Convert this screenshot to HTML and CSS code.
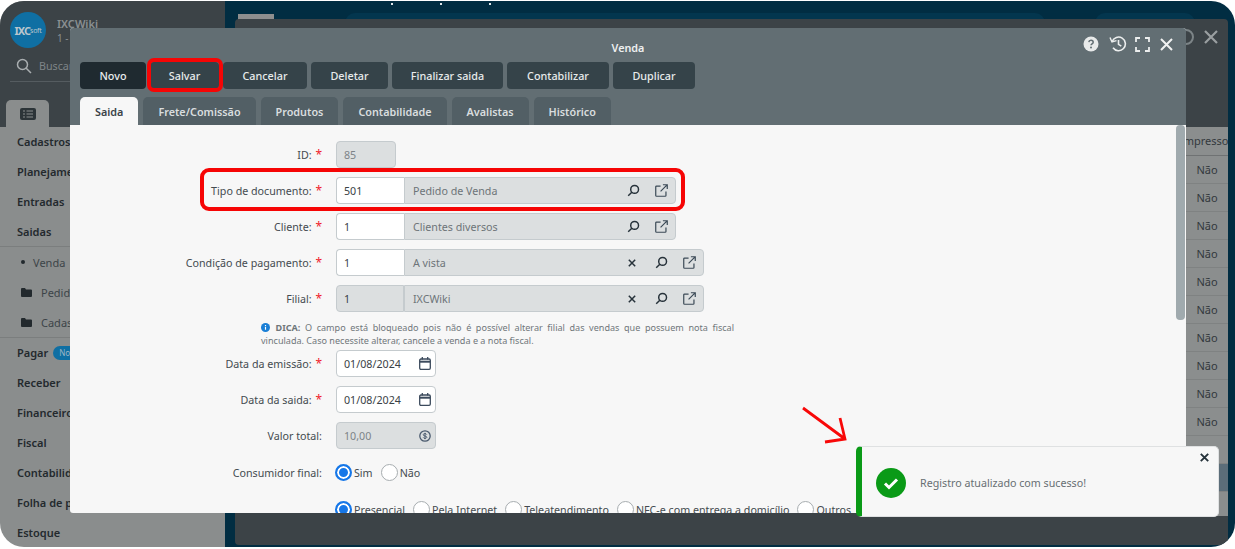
FILE: index.html
```html
<!DOCTYPE html>
<html lang="pt-BR">
<head>
  <meta charset="UTF-8">
  <title>Venda</title>
  <link rel="stylesheet" href="styles.css">
</head>
<body>
  <div class="frame">
    <aside class="sidebar">
      <div class="side-top">
        <div class="brand">
          <div class="logo"><b>IXC</b><span>soft</span></div>
          <div class="brand-text">
            <div class="brand-name">IXCWiki</div>
            <div class="brand-sub">1 - IXCWiki</div>
          </div>
        </div>
        <div class="side-search">
          <svg width="16" height="16" viewBox="0 0 16 16" fill="none" stroke="#a9aeb0" stroke-width="1.5"><circle cx="6.5" cy="6.5" r="5"/><path d="M10.2 10.2 15 15"/></svg>
          <span>Buscar</span>
        </div>
        <div class="side-tab">
          <svg width="16" height="12" viewBox="0 0 16 12"><rect width="16" height="12" rx="2" fill="#2c3438"/><path d="M3 3h2M3 6h2M3 9h2M6.500 3H13M6.500 6H13M6.500 9H13" stroke="#8a8d8d" stroke-width="1.200"/></svg>
        </div>
      </div>
      <nav class="side-menu">
        <div class="menu-item">Cadastros</div>
        <div class="menu-item">Planejamento</div>
        <div class="menu-item">Entradas</div>
        <div class="menu-item">Saidas</div>
        <div class="submenu">
          <div class="sub-item"><i class="dot"></i>Venda</div>
          <div class="sub-item"><svg class="folder" width="11" height="9" viewBox="0 0 11 9"><path d="M0 1a1 1 0 0 1 1-1h3l1 1.500h5a1 1 0 0 1 1 1V8a1 1 0 0 1-1 1H1a1 1 0 0 1-1-1z" fill="#22292d"/></svg>Pedidos</div>
          <div class="sub-item"><svg class="folder" width="11" height="9" viewBox="0 0 11 9"><path d="M0 1a1 1 0 0 1 1-1h3l1 1.500h5a1 1 0 0 1 1 1V8a1 1 0 0 1-1 1H1a1 1 0 0 1-1-1z" fill="#22292d"/></svg>Cadastros</div>
        </div>
        <div class="menu-item">Pagar <span class="badge">Novo</span></div>
        <div class="menu-item">Receber</div>
        <div class="menu-item">Financeiro</div>
        <div class="menu-item">Fiscal</div>
        <div class="menu-item">Contabilidade</div>
        <div class="menu-item">Folha de pagamento</div>
        <div class="menu-item">Estoque</div>
      </nav>
    </aside>

    <main class="desktop">
      <div class="dots"><i></i><i></i><i></i></div>
      <div class="pill pill-a"></div>
      <div class="pill pill-b"></div>
      <div class="back-tab"></div>
      <section class="back-window">
        <div class="back-head">
          <svg class="back-help" width="16" height="16" viewBox="0 0 16 16" fill="none" stroke="#7c8487" stroke-width="2"><circle cx="8" cy="8" r="7"/></svg>
          <svg width="16" height="16" viewBox="0 0 16 16" stroke="#9a9fa1" stroke-width="2.200"><path d="M2 2l12 12M14 2 2 14"/></svg>
        </div>
        <div class="back-table">
          <div class="back-th">Impresso</div>
          <div class="back-td">Não</div>
          <div class="back-td">Não</div>
          <div class="back-td">Não</div>
          <div class="back-td">Não</div>
          <div class="back-td">Não</div>
          <div class="back-td">Não</div>
          <div class="back-td">Não</div>
          <div class="back-td">Não</div>
          <div class="back-td">Não</div>
          <div class="back-td">Não</div>
          <div class="back-td"></div>
          <div class="back-td back-selected"></div>
          <div class="back-td"></div>
        </div>
      </section>
    </main>

    <section class="modal">
      <header class="modal-head">
        <div class="modal-title">Venda</div>
        <div class="modal-icons">
          <svg width="16" height="16" viewBox="0 0 16 16"><circle cx="8" cy="8" r="7.500" fill="#e8eaea"/><path d="M5.800 6.200A2.200 2.200 0 0 1 8 4.300c1.300 0 2.200.8 2.200 1.900 0 1.700-2.200 1.600-2.200 3.100" fill="none" stroke="#626e73" stroke-width="1.500"/><circle cx="8" cy="11.500" r="1" fill="#626e73"/></svg>
          <svg class="ico-history" width="18" height="16" viewBox="0 0 18 16" fill="none" stroke="#eceeee" stroke-width="1.600"><path d="M3.200 5.500A6.800 6.800 0 1 1 4 11.800"/><path d="M1 1.500 3 6l4.500-1.300" stroke-width="1.400"/><path d="M9.500 4v4.300l2.800 1.800"/></svg>
          <svg width="15" height="15" viewBox="0 0 15 15" fill="none" stroke="#eceeee" stroke-width="1.800"><path d="M1 5V1h4M10 1h4v4M14 10v4h-4M5 14H1v-4"/></svg>
          <svg width="13" height="13" viewBox="0 0 13 13" stroke="#f1f2f2" stroke-width="2"><path d="M1 1l11 11M12 1 1 12"/></svg>
        </div>
        <div class="toolbar">
          <button class="btn btn-dark">Novo</button>
          <button class="btn btn-save">Salvar</button>
          <button class="btn btn-cancel">Cancelar</button>
          <button class="btn btn-del">Deletar</button>
          <button class="btn btn-final">Finalizar saida</button>
          <button class="btn btn-cont">Contabilizar</button>
          <button class="btn btn-dup">Duplicar</button>
        </div>
        <div class="tabs">
          <div class="tab active">Saida</div>
          <div class="tab">Frete/Comissão</div>
          <div class="tab">Produtos</div>
          <div class="tab">Contabilidade</div>
          <div class="tab">Avalistas</div>
          <div class="tab">Histórico</div>
        </div>
      </header>

      <div class="modal-body">
        <div class="scroll-thumb"></div>
        <form class="form">
          <div class="row">
            <label class="lbl">ID: <em>*</em></label>
            <div class="field field-id disabled">85</div>
          </div>
          <div class="row">
            <label class="lbl">Tipo de documento: <em>*</em></label>
            <div class="field field-code">501</div>
            <div class="desc">
              <span class="desc-text">Pedido de Venda</span>
              <svg class="ico-search" viewBox="0 0 14 14" fill="none" stroke="#27323a" stroke-width="1.600"><circle cx="8.200" cy="5.800" r="4.200"/><path d="M5.200 8.800 1.300 12.700"/></svg>
              <svg class="ico-open" viewBox="0 0 14 14" fill="none" stroke="#3b4a56" stroke-width="1.300"><path d="M11.800 8v4.300a.9.900 0 0 1-.9.900H1.700a.9.900 0 0 1-.9-.9V3.100a.9.900 0 0 1 .9-.9H6"/><path d="M8.500.8h4.700v4.700M13 1 6 8"/></svg>
            </div>
          </div>
          <div class="row">
            <label class="lbl">Cliente: <em>*</em></label>
            <div class="field field-code">1</div>
            <div class="desc">
              <span class="desc-text">Clientes diversos</span>
              <svg class="ico-search" viewBox="0 0 14 14" fill="none" stroke="#27323a" stroke-width="1.600"><circle cx="8.200" cy="5.800" r="4.200"/><path d="M5.200 8.800 1.300 12.700"/></svg>
              <svg class="ico-open" viewBox="0 0 14 14" fill="none" stroke="#3b4a56" stroke-width="1.300"><path d="M11.800 8v4.300a.9.900 0 0 1-.9.900H1.700a.9.900 0 0 1-.9-.9V3.100a.9.900 0 0 1 .9-.9H6"/><path d="M8.500.8h4.700v4.700M13 1 6 8"/></svg>
            </div>
          </div>
          <div class="row">
            <label class="lbl">Condição de pagamento: <em>*</em></label>
            <div class="field field-code">1</div>
            <div class="desc desc-wide">
              <span class="desc-text">A vista</span>
              <svg class="ico-clear" viewBox="0 0 8 8" stroke="#27323a" stroke-width="1.500"><path d="M.8.800l6.400 6.400M7.200.800.8 7.200"/></svg>
              <svg class="ico-search" viewBox="0 0 14 14" fill="none" stroke="#27323a" stroke-width="1.600"><circle cx="8.200" cy="5.800" r="4.200"/><path d="M5.200 8.800 1.300 12.700"/></svg>
              <svg class="ico-open" viewBox="0 0 14 14" fill="none" stroke="#3b4a56" stroke-width="1.300"><path d="M11.800 8v4.300a.9.900 0 0 1-.9.900H1.700a.9.900 0 0 1-.9-.9V3.100a.9.900 0 0 1 .9-.9H6"/><path d="M8.500.8h4.700v4.700M13 1 6 8"/></svg>
            </div>
          </div>
          <div class="row">
            <label class="lbl">Filial: <em>*</em></label>
            <div class="field field-code disabled dark-text">1</div>
            <div class="desc desc-wide">
              <span class="desc-text">IXCWiki</span>
              <svg class="ico-clear" viewBox="0 0 8 8" stroke="#27323a" stroke-width="1.500"><path d="M.8.800l6.400 6.400M7.200.800.8 7.200"/></svg>
              <svg class="ico-search" viewBox="0 0 14 14" fill="none" stroke="#27323a" stroke-width="1.600"><circle cx="8.200" cy="5.800" r="4.200"/><path d="M5.200 8.800 1.300 12.700"/></svg>
              <svg class="ico-open" viewBox="0 0 14 14" fill="none" stroke="#3b4a56" stroke-width="1.300"><path d="M11.800 8v4.300a.9.900 0 0 1-.9.900H1.700a.9.900 0 0 1-.9-.9V3.100a.9.900 0 0 1 .9-.9H6"/><path d="M8.500.8h4.700v4.700M13 1 6 8"/></svg>
            </div>
          </div>
          <div class="tip">
            <svg width="9" height="9" viewBox="0 0 10 10"><circle cx="5" cy="5" r="5" fill="#1a7fd6"/><path d="M5 4.300v3.200M5 2.300v1" stroke="#fff" stroke-width="1.300"/></svg>
            <b>DICA:</b> O campo está bloqueado pois não é possível alterar filial das vendas que possuem nota fiscal vinculada. Caso necessite alterar, cancele a venda e a nota fiscal.
          </div>
          <div class="row">
            <label class="lbl">Data da emissão: <em>*</em></label>
            <div class="field field-date">01/08/2024
              <svg width="12" height="13" viewBox="0 0 12 13" fill="none" stroke="#3b4a5c" stroke-width="1.300"><rect x=".7" y="2" width="10.600" height="10.300" rx="1.200"/><path d="M.7 4.700h10.600" stroke-width="2"/><path d="M3.300 0v2.500M8.700 0v2.500"/></svg>
            </div>
          </div>
          <div class="row">
            <label class="lbl">Data da saida: <em>*</em></label>
            <div class="field field-date">01/08/2024
              <svg width="12" height="13" viewBox="0 0 12 13" fill="none" stroke="#3b4a5c" stroke-width="1.300"><rect x=".7" y="2" width="10.600" height="10.300" rx="1.200"/><path d="M.7 4.700h10.600" stroke-width="2"/><path d="M3.300 0v2.500M8.700 0v2.500"/></svg>
            </div>
          </div>
          <div class="row">
            <label class="lbl">Valor total:</label>
            <div class="field field-date disabled">10,00
              <svg width="12" height="12" viewBox="0 0 12 12" fill="none" stroke="#4a5a6e" stroke-width="1.300"><circle cx="6" cy="6" r="5.200"/><path d="M7.800 4.600C7.500 3.900 6.800 3.600 6 3.600c-1 0-1.800.5-1.800 1.200 0 1.600 3.600.8 3.600 2.400 0 .7-.8 1.200-1.800 1.200-.8 0-1.500-.3-1.800-1M6 2.800v6.400" stroke-width="1"/></svg>
            </div>
          </div>
          <div class="row row-radio">
            <label class="lbl">Consumidor final:</label>
            <div class="radios">
              <span class="radio on"></span><span class="radio-text">Sim</span>
              <span class="radio"></span><span class="radio-text">Não</span>
            </div>
          </div>
          <div class="row row-radio">
            <label class="lbl"></label>
            <div class="radios">
              <span class="radio on"></span><span class="radio-text">Presencial</span>
              <span class="radio"></span><span class="radio-text">Pela Internet</span>
              <span class="radio"></span><span class="radio-text">Teleatendimento</span>
              <span class="radio"></span><span class="radio-text">NFC-e com entrega a domicílio</span>
              <span class="radio"></span><span class="radio-text">Outros</span>
            </div>
          </div>
        </form>
      </div>
    </section>

    <div class="toast">
      <svg class="toast-check" width="30" height="30" viewBox="0 0 30 30"><circle cx="15" cy="15" r="15" fill="#0a9a17"/><path d="M9 15.500l4 4 8-8" fill="none" stroke="#fff" stroke-width="3"/></svg>
      <span class="toast-text">Registro atualizado com sucesso!</span>
      <svg class="toast-close" width="9" height="9" viewBox="0 0 9 9" stroke="#25323a" stroke-width="1.900"><path d="M.8.800l7.400 7.400M8.200.800.8 8.200"/></svg>
    </div>

    <!-- marcacoes vermelhas do print -->
    <div class="mark mark-save"></div>
    <div class="mark mark-doc"></div>
    <svg class="mark-arrow" width="50" height="38" viewBox="0 0 50 38" fill="none" stroke="#f80808" stroke-width="2.800"><path d="M2 2l42 31M39 12l5 21-20 3"/></svg>
  </div>
</body>
</html>
```

FILE: styles.css
```css
* {
  box-sizing: border-box;
}

html, body {
  margin: 0;
  height: 549px;
  overflow: hidden;
  background-color: #fff;
}

body {
  font-family: "Noto Sans", sans-serif;
  font-size: 10.7px;
  color: #444b50;
}

.frame {
  position: relative;
  display: flex;
  width: 1235px;
  height: 546px;
  margin-top: 1px;
  overflow: hidden;
  border-radius: 24px;
}

/* menu lateral */
.sidebar {
  width: 225px;
  flex: none;
  background-color: #8a8d8d;
}

.side-top {
  position: relative;
  height: 126px;
  background-color: #3c4347;
}

.brand {
  display: flex;
  gap: 11px;
  padding: 11px 0 0 10px;
}

.logo {
  display: flex;
  align-items: center;
  justify-content: center;
  width: 36px;
  height: 36px;
  border-radius: 50%;
  background-color: #0f6fa3;
  color: #b9c6cd;
  font-size: 11px;
  letter-spacing: -1px;
}

.logo span {
  font-size: 7px;
  letter-spacing: -.3px;
}

.brand-text {
  padding-top: 3px;
  color: #8a9092;
}

.brand-name {
  font-weight: 600;
  font-size: 11px;
  line-height: 17px;
}

.brand-sub {
  font-size: 10px;
  line-height: 13px;
}

.side-search {
  display: flex;
  align-items: center;
  gap: 7px;
  margin: 7px 0 0 10px;
  height: 27px;
  padding: 0 0 5px 6px;
  border-bottom: 1px solid #555c60;
  color: #7f8588;
}

.side-tab {
  position: absolute;
  left: 6px;
  bottom: 0;
  display: flex;
  align-items: center;
  justify-content: center;
  width: 43px;
  height: 27px;
  border-radius: 5px 5px 0 0;
  background-color: #8a8d8d;
}

.menu-item {
  height: 30px;
  padding-left: 17px;
  font-size: 11px;
  line-height: 29px;
  font-weight: 600;
  color: #23292d;
  white-space: nowrap;
}

.submenu {
  margin-top: -1px;
  border-top: 1px solid #7b7e7e;
  border-bottom: 1px solid #7b7e7e;
}

.sub-item {
  display: flex;
  align-items: center;
  height: 30px;
  padding-left: 21px;
  font-size: 11px;
  color: #3c4448;
  white-space: nowrap;
}

.dot {
  width: 4px;
  height: 4px;
  margin-right: 8px;
  border-radius: 50%;
  background-color: #22292d;
}

.folder {
  margin-right: 9px;
}

.badge {
  display: inline-block;
  margin-left: 2px;
  padding: 0 6px;
  border-radius: 8px;
  background-color: #0f6fa3;
  color: #9cb6c4;
  font-size: 8px;
  font-weight: 400;
  line-height: 14px;
  vertical-align: 1px;
}

/* fundo atras do modal */
.desktop {
  position: relative;
  flex: 1;
  background-color: #012d42;
}

.dots {
  position: absolute;
  left: 166px;
  top: 2px;
  display: flex;
  gap: 47px;
}

.dots i {
  width: 2px;
  height: 2px;
  background-color: #dfe6ea;
}

.pill {
  position: absolute;
  top: 12px;
  height: 14px;
  border-radius: 10px 10px 0 0;
  background-color: #03364e;
}

.pill-a {
  left: 120px;
  width: 700px;
}

.pill-b {
  left: 870px;
  width: 100px;
}

.back-tab {
  position: absolute;
  left: 13px;
  top: 13px;
  width: 36px;
  height: 6px;
  background-color: #8e8e8e;
}

.back-window {
  position: absolute;
  left: 10px;
  top: 18px;
  width: 993px;
  height: 526px;
  border-radius: 4px;
  background-color: #3c4347;
}

.back-head {
  display: flex;
  justify-content: flex-end;
  align-items: center;
  gap: 9px;
  height: 36px;
  padding: 0 9px 0 0;
}

.back-table {
  position: absolute;
  left: 951px;
  top: 108px;
  width: 42px;
  height: 389px;
  overflow: hidden;
  background-color: #8b8e8e;
  color: #33393d;
  font-size: 11px;
}

.back-th {
  height: 29px;
  line-height: 28px;
  border-bottom: 1px solid #6f7273;
  white-space: nowrap;
  margin-left: -6px;
}

.back-td {
  height: 28px;
  line-height: 27px;
  text-align: center;
  border-bottom: 1px solid #7f8282;
}

.back-selected {
  background-color: #5b6d79;
}

/* modal */
.modal {
  position: absolute;
  left: 70px;
  top: 27px;
  width: 1116px;
  height: 485px;
  overflow: hidden;
  border-radius: 3px;
  background-color: #f7f7f7;
  display: flex;
  flex-direction: column;
}

.modal-head {
  position: relative;
  height: 97px;
  flex: none;
  padding: 34px 0 0 10px;
  background-color: #626e73;
}

.modal-title {
  position: absolute;
  left: 0;
  right: 0;
  top: 11px;
  text-align: center;
  color: #eef0f0;
  font-size: 10.8px;
  font-weight: 600;
  line-height: 17px;
}

.modal-icons {
  position: absolute;
  right: 13px;
  top: 8px;
  display: flex;
  align-items: center;
  gap: 10px;
}

.ico-history {
  margin-right: -2px;
}

.toolbar {
  display: flex;
  gap: 4px;
}

.btn {
  height: 27px;
  padding: 0;
  border: none;
  border-radius: 4px;
  background-color: #354349;
  color: #e8ebec;
  font-family: inherit;
  font-size: 10.8px;
  font-weight: 500;
}

.btn-dark {
  width: 66px;
  background-color: #1f2a30;
}

.btn-save {
  width: 69px;
}

.btn-cancel {
  width: 84px;
}

.btn-del {
  width: 77px;
}

.btn-final {
  width: 111px;
}

.btn-cont {
  width: 102px;
}

.btn-dup {
  width: 82px;
}

.tabs {
  display: flex;
  gap: 5px;
  margin-top: 8px;
}

.tab {
  height: 28px;
  padding: 0 15px;
  border-radius: 5px 5px 0 0;
  background-color: #525f65;
  color: #d9dddf;
  font-size: 10.8px;
  font-weight: 600;
  line-height: 30px;
}

.tab.active {
  background-color: #f7f7f7;
  color: #3a4348;
}

.modal-body {
  position: relative;
  flex: 1;
  overflow: hidden;
}

.scroll-thumb {
  position: absolute;
  right: 1px;
  top: 0;
  width: 9px;
  height: 195px;
  border-radius: 4px;
  background-color: #a0aaae;
}

.form {
  padding-top: 16px;
}

.row {
  display: flex;
  align-items: center;
  height: 27px;
  margin-bottom: 9px;
}

.lbl {
  width: 252px;
  flex: none;
  margin-right: 14px;
  text-align: right;
  color: #444b50;
  white-space: nowrap;
}

.lbl em {
  color: #f01c2c;
  font-size: 12px;
  font-style: normal;
  margin-left: 1px;
}

.field {
  display: flex;
  align-items: center;
  height: 27px;
  padding: 0 7px;
  border: 1px solid #c5cbce;
  border-radius: 4px;
  background-color: #fff;
  color: #3a4246;
}

.field-id {
  width: 60px;
}

.field-code {
  width: 68px;
  border-radius: 4px 0 0 4px;
  border-right: none;
}

.field-date {
  width: 100px;
  justify-content: space-between;
  padding-right: 4px;
}

.disabled {
  background-color: #dcdfe0;
  color: #7c8488;
}

.dark-text {
  color: #3a4246;
  border-right: 1px solid #c5cbce;
}

.desc {
  display: flex;
  align-items: center;
  width: 272px;
  height: 27px;
  padding: 0 7px 0 8px;
  border: 1px solid #c5cbce;
  border-radius: 0 4px 4px 0;
  background-color: #dcdfe0;
  color: #6d7478;
}

.desc-wide {
  width: 300px;
}

.desc-text {
  flex: 1;
}

.ico-clear {
  width: 8px;
  height: 8px;
  margin-right: 19px;
}

.ico-search {
  width: 13px;
  height: 13px;
  margin-right: 15px;
}

.ico-open {
  width: 13px;
  height: 13px;
}

.tip {
  width: 473px;
  margin: 4px 0 3px 191px;
  height: 26px;
  font-size: 9.07px;
  line-height: 13px;
  text-align: justify;
  color: #6f767a;
}

.tip svg {
  vertical-align: -1px;
  margin-right: 1px;
}

.row-radio {
  margin-top: 10px;
  margin-bottom: 10px;
}

.radios {
  display: flex;
  align-items: center;
  margin-left: -1px;
  white-space: nowrap;
}

.radio {
  width: 17px;
  height: 17px;
  margin-right: 2px;
  flex: none;
  border: 1px solid #a7adb0;
  border-radius: 50%;
  background-color: #fff;
}

.radio.on {
  border: 2px solid #1677e8;
  box-shadow: inset 0 0 0 2px #fff;
  background-color: #1677e8;
}

.radio-text {
  margin-right: 8px;
}

/* notificacao */
.toast {
  position: absolute;
  left: 856px;
  top: 445px;
  display: flex;
  align-items: center;
  width: 363px;
  height: 71px;
  padding: 2px 0 0 14px;
  border: 1px solid #dfe1e2;
  border-left: 6px solid #0a9a17;
  border-radius: 5px;
  background-color: #f7f7f7;
}

.toast-check {
  flex: none;
  margin-right: 14px;
}

.toast-text {
  color: #686f73;
  font-size: 10.7px;
}

.toast-close {
  position: absolute;
  right: 9px;
  top: 6px;
}

.mark {
  position: absolute;
  border: 4px solid #f60505;
}

.mark-save {
  left: 147px;
  top: 57px;
  width: 76px;
  height: 34px;
  border-radius: 7px;
}

.mark-doc {
  left: 200px;
  top: 167px;
  width: 485px;
  height: 43px;
  border-radius: 9px;
}

.mark-arrow {
  position: absolute;
  left: 801px;
  top: 405px;
}
```
